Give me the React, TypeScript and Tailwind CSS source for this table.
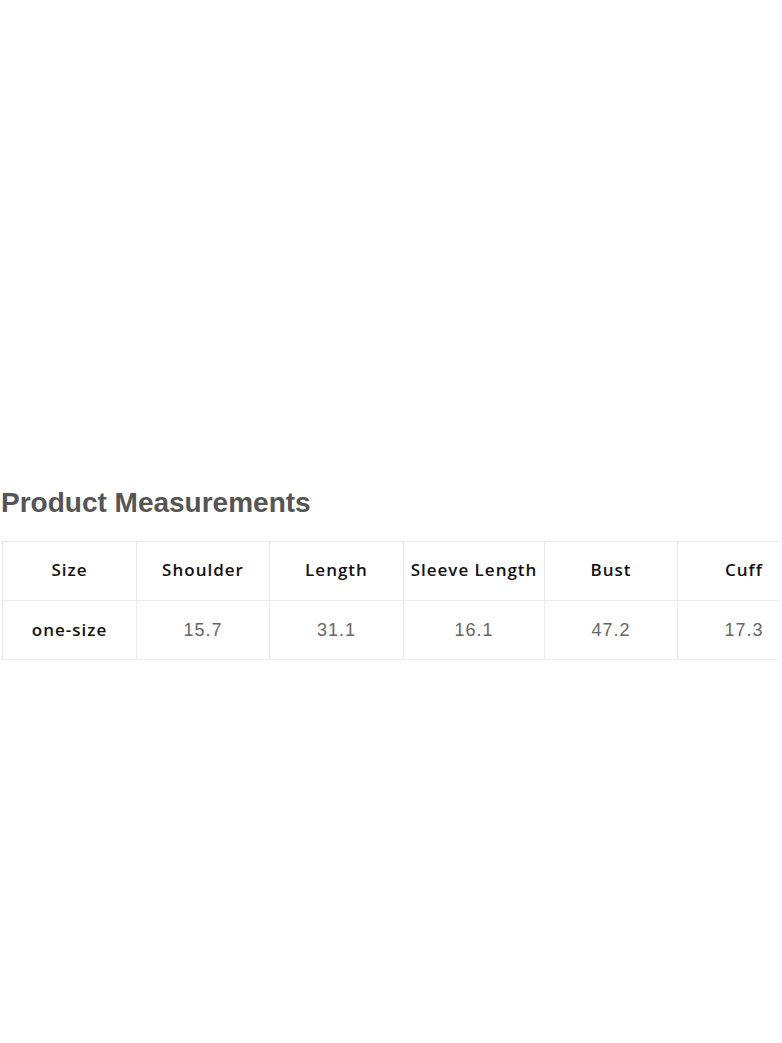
const headers = ["Size", "Shoulder", "Length", "Sleeve Length", "Bust", "Cuff"];
const values = ["one-size", "15.7", "31.1", "16.1", "47.2", "17.3"];
const widths = [134, 133, 134, 141, 133, 133];

export default function App() {
	return (
		<div className="h-[1043px] w-[782px] overflow-hidden bg-white">
			<div className="h-[487px]" />
			<h2 className="pl-[1px] font-['Liberation_Sans',Arial,sans-serif] text-[28px] font-bold leading-[32px] text-[#555555]">
				Product Measurements
			</h2>
			<div className="mt-[22px] ml-[2px] w-[777px] overflow-hidden">
				<div className="flex w-[808px] flex-col border-t border-l border-[#e6e6e6]">
					<div className="flex h-[59px] border-b border-[#ececec]">
						{headers.map((h, i) => (
							<div
								key={h}
								style={{ width: widths[i] }}
								className="flex shrink-0 items-center justify-center border-r border-[#e6e6e6] pb-[2px] font-['Open_Sans',sans-serif] text-[17px] font-semibold tracking-[1px] text-[#111111]"
							>
								{h}
							</div>
						))}
					</div>
					<div className="flex h-[59px] border-b border-[#f0f0f0]">
						{values.map((v, i) => (
							<div
								key={i}
								style={{ width: widths[i] }}
								className={
									i === 0
										? "flex shrink-0 items-center justify-center border-r border-[#ececec] font-['Open_Sans',sans-serif] text-[17px] font-semibold tracking-[1px] text-[#111111]"
										: "flex shrink-0 items-center justify-center border-r border-[#ececec] font-['Liberation_Sans',Arial,sans-serif] text-[18px] tracking-[1px] text-[#666666]"
								}
							>
								{v}
							</div>
						))}
					</div>
				</div>
			</div>
		</div>
	);
}
